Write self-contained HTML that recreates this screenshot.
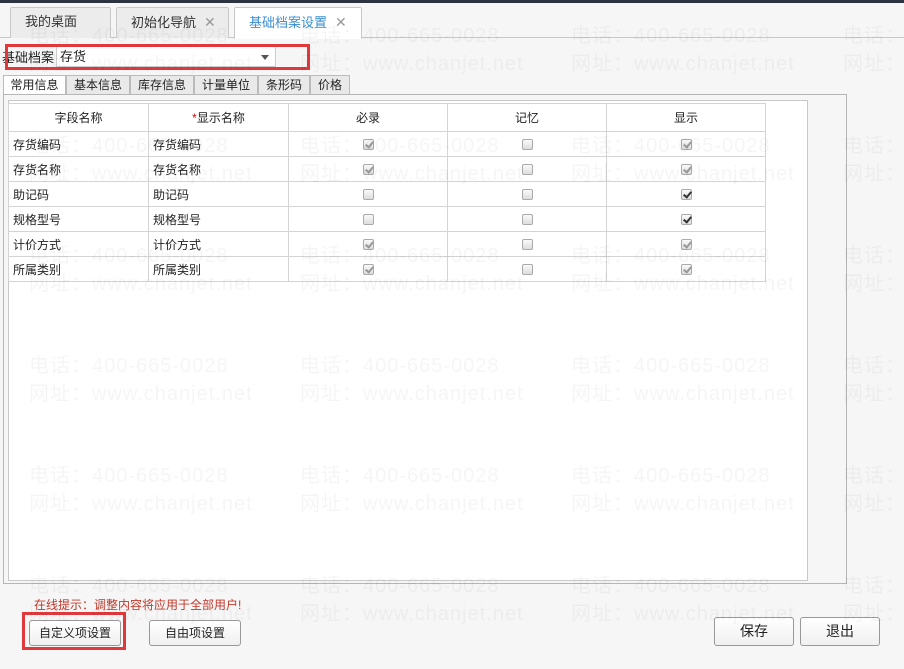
<!DOCTYPE html>
<html><head><meta charset="utf-8"><style>
*{margin:0;padding:0;box-sizing:border-box}
body{width:904px;height:669px;overflow:hidden;background:#f6f6f6;font-family:"Liberation Sans","Noto Sans CJK SC",sans-serif;font-size:12px;color:#222;position:relative}
.a{position:absolute}
.tab{position:absolute;top:7px;height:31px;border:1px solid #c8c8c8;border-bottom:none;background:#ececec;font-size:13px;color:#333;line-height:28px;padding-left:14px;border-radius:2px 2px 0 0}
.x{color:#999;font-size:14px;margin-left:8px}
.st{position:absolute;top:75px;height:19px;border:1px solid #bbb;border-bottom:none;background:#e9e9e9;line-height:18px;text-align:center;font-size:12px}
table{border-collapse:collapse;position:absolute;left:8px;top:103px}
td{border:1px solid #d4d4d4;height:25px;font-size:12px;padding-left:4px}
th{border:1px solid #d4d4d4;height:28px;font-weight:normal;font-size:12px}
.cb{display:inline-block;width:11px;height:11px;border:1px solid #aaa;border-radius:2px;background:linear-gradient(#fafafa,#ddd);position:relative;vertical-align:middle}
.cb.c::after,.cb.d::after{content:"";position:absolute;left:3px;top:0px;width:3px;height:6px;border:solid #999;border-width:0 2px 2px 0;transform:rotate(40deg)}
.cb.d::after{border-color:#333}
.c2{text-align:center;padding:0}
.wm{position:absolute;font-size:20px;color:rgba(0,0,0,0.04);white-space:nowrap;pointer-events:none;letter-spacing:1px}
.btn{position:absolute;height:26px;border:1px solid #999;border-radius:3px;background:linear-gradient(#fff,#f0f0f0);text-align:center;line-height:24px;font-size:12px}
</style></head><body>
<div class="a" style="left:0;top:0;width:904px;height:3px;background:#2e3340"></div>
<div class="a" style="left:0;top:37px;width:904px;height:1px;background:#c8c8c8"></div>
<div class="tab" style="left:10px;width:101px">我的桌面</div>
<div class="tab" style="left:116px;width:113px">初始化导航<span class="x">✕</span></div>
<div class="tab" style="left:234px;width:128px;background:#fff;height:32px;color:#3b8fd0">基础档案设置<span class="x">✕</span></div>

<div class="a" style="left:2px;top:47px;font-size:13px">基础档案</div>
<div class="a" style="left:56px;top:46px;width:220px;height:21px;background:#fff;border:1px solid #ccc;font-size:13px;line-height:20px;padding-left:3px">存货<span style="position:absolute;right:6px;top:8px;border:4px solid transparent;border-top:5px solid #555;border-bottom:none"></span></div>
<div class="a" style="left:5px;top:44px;width:305px;height:26px;border:3px solid #e0383b"></div>

<div class="st" style="left:3px;width:63px;background:#fff;height:20px">常用信息</div>
<div class="st" style="left:66px;width:64px">基本信息</div>
<div class="st" style="left:130px;width:64px">库存信息</div>
<div class="st" style="left:194px;width:64px">计量单位</div>
<div class="st" style="left:258px;width:52px">条形码</div>
<div class="st" style="left:310px;width:40px">价格</div>

<div class="a" style="left:3px;top:94px;width:844px;height:490px;border:1px solid #b5b5b5;background:#f6f6f6"></div>
<div class="a" style="left:8px;top:100px;width:800px;height:481px;border:1px solid #c8c8c8;background:#fff"></div>

<table>
<tr><th style="width:140px">字段名称</th><th style="width:140px"><span style="color:#d00">*</span>显示名称</th><th style="width:159px">必录</th><th style="width:159px">记忆</th><th style="width:159px">显示</th></tr>
<tr><td>存货编码</td><td>存货编码</td><td class="c2"><span class="cb c"></span></td><td class="c2"><span class="cb"></span></td><td class="c2"><span class="cb c"></span></td></tr>
<tr><td>存货名称</td><td>存货名称</td><td class="c2"><span class="cb c"></span></td><td class="c2"><span class="cb"></span></td><td class="c2"><span class="cb c"></span></td></tr>
<tr><td>助记码</td><td>助记码</td><td class="c2"><span class="cb"></span></td><td class="c2"><span class="cb"></span></td><td class="c2"><span class="cb d"></span></td></tr>
<tr><td>规格型号</td><td>规格型号</td><td class="c2"><span class="cb"></span></td><td class="c2"><span class="cb"></span></td><td class="c2"><span class="cb d"></span></td></tr>
<tr><td>计价方式</td><td>计价方式</td><td class="c2"><span class="cb c"></span></td><td class="c2"><span class="cb"></span></td><td class="c2"><span class="cb c"></span></td></tr>
<tr><td>所属类别</td><td>所属类别</td><td class="c2"><span class="cb c"></span></td><td class="c2"><span class="cb"></span></td><td class="c2"><span class="cb c"></span></td></tr>
</table>

<div class="a" style="left:34px;top:596px;color:#c0392b;font-size:12px">在线提示：调整内容将应用于全部用户!</div>
<div class="btn" style="left:29px;top:620px;width:92px">自定义项设置</div>
<div class="btn" style="left:149px;top:620px;width:92px">自由项设置</div>
<div class="a" style="left:22px;top:612px;width:104px;height:38px;border:3px solid #e0383b"></div>
<div class="btn" style="left:714px;top:617px;width:80px;height:29px;line-height:27px;font-size:14px">保存</div>
<div class="btn" style="left:800px;top:617px;width:80px;height:29px;line-height:27px;font-size:14px">退出</div>

<div id="w"></div>
<script>
var h='';var xs=[29,300,571,843];
for(var r=0;r<6;r++){var y=19+r*110;for(var i=0;i<4;i++){h+='<div class="wm" style="left:'+xs[i]+'px;top:'+y+'px">电话：400-665-0028</div><div class="wm" style="left:'+xs[i]+'px;top:'+(y+28)+'px">网址：www.chanjet.net</div>';}}
document.getElementById('w').innerHTML=h;
</script>
</body></html>
